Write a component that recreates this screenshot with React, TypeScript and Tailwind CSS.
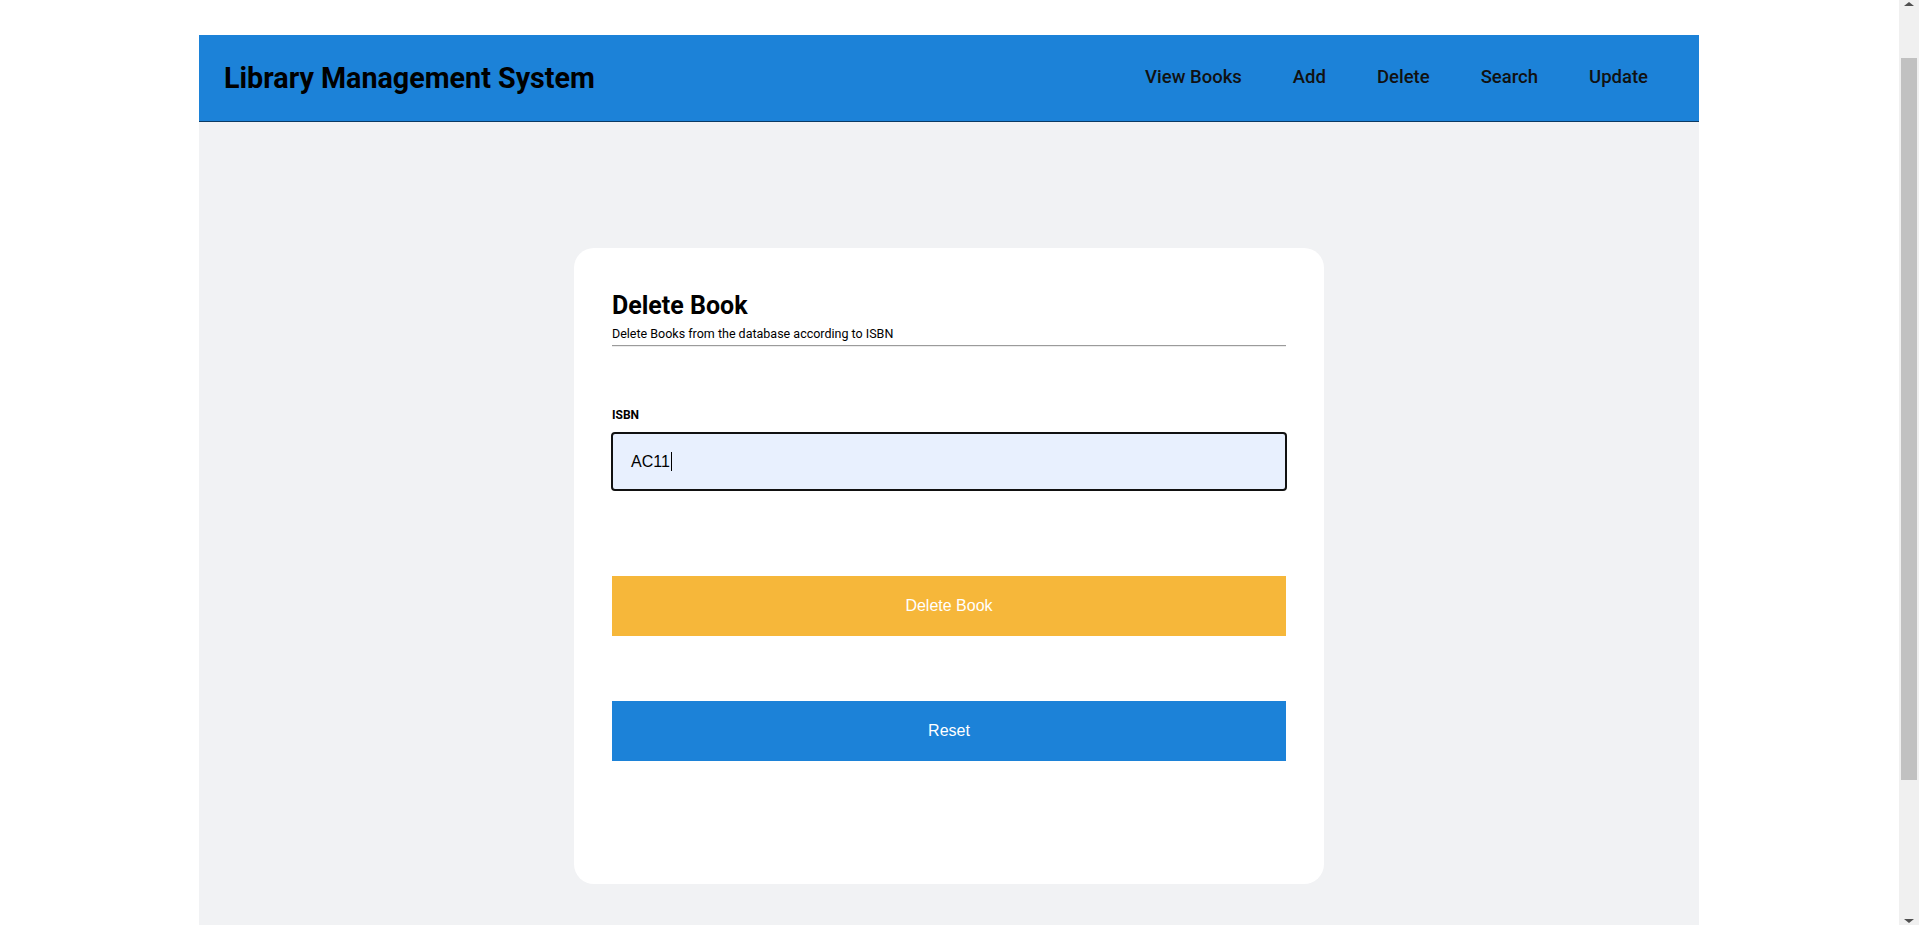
import React, { useEffect } from 'react';

const NAV_LINKS = ['View Books', 'Add', 'Delete', 'Search', 'Update'];

// the browser scrollbar visible along the right edge of the reference
const ScrollBar = () => (
  <div className="fixed top-0 right-0 w-[20px] h-screen bg-[#f0f0f0] flex flex-col items-center">
    <svg width="12" height="8" viewBox="0 0 12 8" className="mt-[1px]">
      <polygon points="6,1 11,5 1,5" fill="#505050" />
    </svg>
    <div className="w-[16px] h-[722px] bg-[#c1c1c1] mt-[49px]"></div>
    <div className="flex-1"></div>
    <svg width="12" height="8" viewBox="0 0 12 8" className="mb-[1px]">
      <polygon points="1,3 11,3 6,7" fill="#505050" />
    </svg>
  </div>
);

const App = () => {
  // the reference was taken with the page scrolled down a little
  useEffect(() => {
    window.scrollTo(0, 52);
  }, []);

  return (
    <div className="bg-white min-h-screen pt-[87px] font-['Roboto',sans-serif]">
      <div className="w-[1500px] ml-[199px]">

        {/* Header */}
        <header className="h-[87px] bg-[#1c82d8] border-b border-[#0b3a63] flex items-center justify-between pl-[25px] pr-[51px]">
          <h1 className="text-[28.7px] font-bold text-black leading-none">Library Management System</h1>
          <nav className="flex items-center gap-[51px]">
            {NAV_LINKS.map(link => (
              <a key={link} className="text-[18.5px] font-medium text-[#111] cursor-pointer">{link}</a>
            ))}
          </nav>
        </header>

        {/* Main */}
        <main className="bg-[#f1f2f4] h-[968px] pt-[126px]">
          <div className="w-[750px] mx-auto bg-white rounded-[20px] px-[38px] pt-[43px] pb-[123px] flex flex-col">
            <h2 className="text-[25px] leading-[29px] font-bold text-black">Delete Book</h2>
            <p className="text-[12.5px] leading-[14px] text-black mt-[7px]">Delete Books from the database according to ISBN</p>
            <hr className="mt-[4px] border-t border-[#9b9b9b] border-b border-b-[#ececec]" />

            <label className="text-[12px] leading-[13px] font-bold text-black mt-[62px]">ISBN</label>
            <div className="mt-[10px] h-[59px] -mx-px border-2 border-[#111] rounded-[4px] bg-[#e8f0fe] flex items-center pl-[18px] font-['Liberation_Sans',Arial,sans-serif] text-[16px] text-black">
              <span>AC11</span>
              <span className="w-px h-[19px] bg-black ml-px"></span>
            </div>

            <button className="mt-[85px] h-[60px] w-full bg-[#f6b73a] text-white text-[16px] font-['Liberation_Sans',Arial,sans-serif]">
              Delete Book
            </button>
            <button className="mt-[65px] h-[60px] w-full bg-[#1c82d8] text-white text-[16px] font-['Liberation_Sans',Arial,sans-serif]">
              Reset
            </button>
          </div>
        </main>

      </div>
      <ScrollBar />
    </div>
  );
};

export default App;
